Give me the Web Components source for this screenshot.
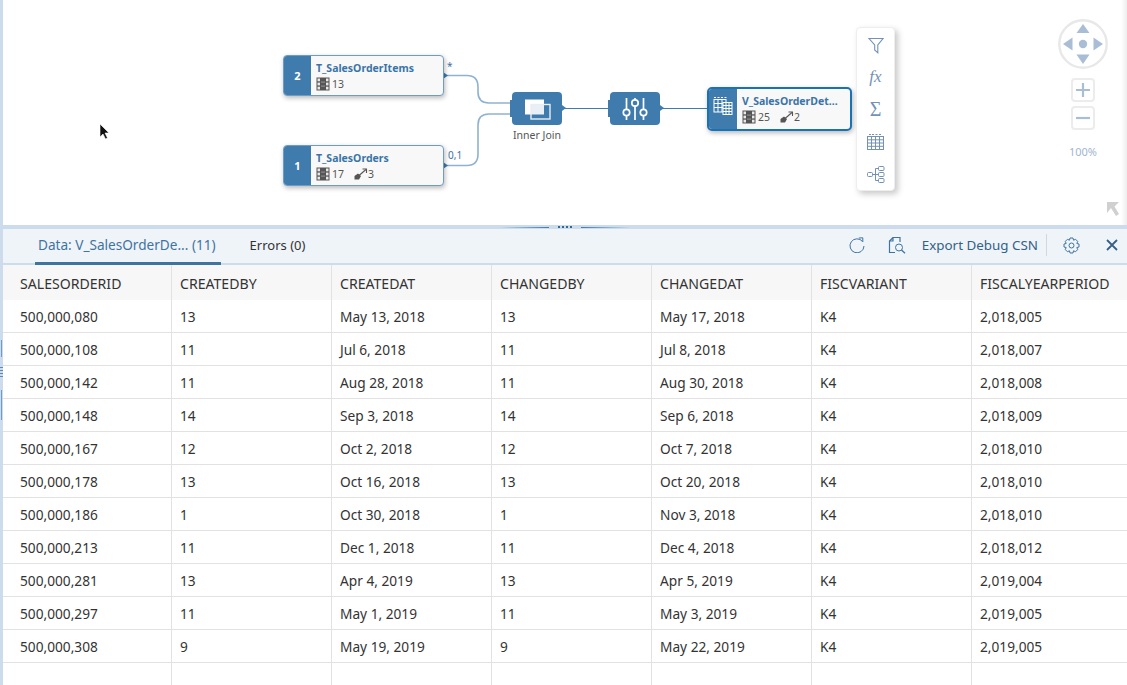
<!DOCTYPE html>
<html>
<head>
<meta charset="utf-8">
<title>Data preview</title>
<style>
  html, body { margin: 0; height: 100%; overflow: hidden; background: #fff; }
  body { font-family: "Noto Sans", "Liberation Sans", sans-serif; color: #333; }
</style>
</head>
<body>
<app-shell>
  <flow-canvas></flow-canvas>
  <split-bar></split-bar>
  <data-panel></data-panel>
</app-shell>

<script>
// small icons shared by the nodes
const ICON_COLUMNS = `<svg width="14" height="14" viewBox="0 0 14 14"><rect x="0.5" y="0.5" width="13" height="13" fill="#555"/><g fill="#e8e8e8"><rect x="1.5" y="1.5" width="2.5" height="2.8"/><rect x="1.5" y="5.6" width="2.5" height="2.8"/><rect x="1.5" y="9.7" width="2.5" height="2.8"/><rect x="10" y="1.5" width="2.5" height="2.8"/><rect x="10" y="5.6" width="2.5" height="2.8"/><rect x="10" y="9.7" width="2.5" height="2.8"/></g><rect x="5" y="4.6" width="4" height="1" fill="#999"/><rect x="5" y="8.6" width="4" height="1" fill="#999"/></svg>`;
const ICON_ASSOC = `<svg class="assoc" width="14" height="12" viewBox="0 0 14 12"><path d="M0.500 8 L4 5.500 L7 8 L5 11.500 H0.500 Z" fill="#555"/><path d="M5 7.500 L12 1.500" stroke="#555" stroke-width="1.100" fill="none"/><path d="M8.500 1 H12.500 V5" stroke="#555" stroke-width="1.100" fill="none"/></svg>`;
const ICON_TABLE_VIEW = `<svg width="20" height="20" viewBox="0 0 20 20" fill="none" stroke="#fff" stroke-width="1"><path d="M1 1.5h2M4.5 1.5h2M8 1.5h2M11.5 1.5h2" /><rect x="1" y="3.5" width="12" height="12.5"/><path d="M5 3.5v12.5M9 3.5v12.5M1 7.5h12M1 11.5h12"/><rect x="10" y="6.5" width="9" height="12" fill="#3f7cad"/><path d="M13 6.5v12M16 6.5v12M10 9.5h9M10 12.5h9M10 15.5h9"/></svg>`;

class AppShell extends HTMLElement {
  constructor() {
    super();
    this.attachShadow({ mode: 'open' });
    this.shadowRoot.innerHTML = `
      <style>
        :host { display: flex; width: 100%; height: 685px; overflow: hidden; }
        .edge { position: relative; flex: 0 0 3px; background: #cddcec; }
        .edge i { position: absolute; left: 1px; width: 1px; background: #6f9cc3; }
        .edge b { position: absolute; left: 0; width: 3px; height: 1px; background: #5b8bb6; }
        .main { flex: 1; min-width: 0; display: flex; flex-direction: column; }
      </style>
      <div class="edge">
        <i style="top:340px;height:17px"></i><i style="top:390px;height:30px"></i>
        <b style="top:367px"></b><b style="top:370px"></b><b style="top:373px"></b><b style="top:376px"></b>
      </div>
      <div class="main"><slot></slot></div>`;
  }
}

class FlowNode extends HTMLElement {
  constructor() {
    super();
    this.attachShadow({ mode: 'open' });
  }
  connectedCallback() {
    const assoc = this.getAttribute('assoc');
    const badge = this.getAttribute('badge');
    this.shadowRoot.innerHTML = `
      <style>
        :host { position: absolute; display: flex; box-sizing: border-box; border: 1px solid #6f9cc3; border-radius: 4px;
                background: #f8f8f8; box-shadow: 1px 2px 5px rgba(0,0,0,.28); overflow: hidden; }
        :host([selected]) { border: 2px solid #1a72b5; border-radius: 5px; }
        .side { flex: 0 0 27px; background: #3f7cad; color: #fff; font-size: 11px; font-weight: 700;
                display: flex; align-items: center; justify-content: center; }
        :host([selected]) .side { flex-basis: 28px; align-items: flex-start; padding-top: 7px; box-sizing: border-box; }
        .body { flex: 1; min-width: 0; padding: 5px 0 0 5px; }
        .name { font-size: 10.5px; font-weight: 700; color: #3a74a6; line-height: 14px; white-space: nowrap; }
        .meta { display: flex; align-items: center; font-size: 10.5px; color: #555; line-height: 14px; margin-top: 2px; }
        .meta svg { display: block; margin-right: 2px; }
        .meta svg.assoc { margin-right: 0; }
        .meta .n { margin-right: 10px; }
      </style>
      <div class="side">${badge || ICON_TABLE_VIEW}</div>
      <div class="body">
        <div class="name">${this.getAttribute('name')}</div>
        <div class="meta">${ICON_COLUMNS}<span class="n">${this.getAttribute('columns')}</span>${assoc ? ICON_ASSOC + '<span>' + assoc + '</span>' : ''}</div>
      </div>`;
  }
}

class OpNode extends HTMLElement {
  constructor() {
    super();
    this.attachShadow({ mode: 'open' });
    this.shadowRoot.innerHTML = `
      <style>
        :host { position: absolute; display: block; width: 50px; height: 33px; box-sizing: border-box;
                background: #3f7cad; border-radius: 4px; }
        .in { position: absolute; left: -2px; top: 8px; width: 2px; height: 17px; background: #3f7cad; }
        .out { position: absolute; right: -4px; top: 13px; border-left: 4px solid #3f7cad; border-top: 3.5px solid transparent; border-bottom: 3.5px solid transparent; }
        .icon { display: flex; height: 100%; align-items: center; justify-content: center; }
        .label { position: absolute; top: 36px; left: -20px; right: -20px; text-align: center; font-size: 10.5px; color: #555; line-height: 14px; }
      </style>
      <span class="in"></span><span class="out"></span>
      <div class="icon"><slot></slot></div>
      <div class="label"><slot name="label"></slot></div>`;
  }
}

class ToolPalette extends HTMLElement {
  constructor() {
    super();
    this.attachShadow({ mode: 'open' });
    this.shadowRoot.innerHTML = `
      <style>
        :host { position: absolute; left: 853px; top: 27px; width: 39px; height: 164px; box-sizing: border-box;
                display: flex; flex-direction: column; align-items: center; padding-top: 1px;
                background: #fff; border: 1px solid #eee; border-radius: 4px; box-shadow: 3px 3px 6px rgba(0,0,0,.22); }
        .t { flex: 0 0 32.3px; display: flex; align-items: center; justify-content: center; color: #7392b5; }
        .fx { font: italic 17px "Liberation Serif", serif; }
        .sum { font: 20px "Liberation Serif", serif; }
        svg { display: block; }
      </style>
      <div class="t"><svg width="16" height="17" viewBox="0 0 16 17" fill="none" stroke="#7392b5" stroke-width="1.1"><path d="M1 1.5 H15 L9.8 8 V15.8 L6.7 13 V8 Z"/></svg></div>
      <div class="t fx">fx</div>
      <div class="t sum">Σ</div>
      <div class="t"><svg width="17" height="16" viewBox="0 0 17 16" fill="none" stroke="#7392b5" stroke-width="1"><path d="M2 .5h2M5 .5h2M8.500 .5h2M12 .5h2"/><rect x=".5" y="2.500" width="16" height="13"/><path d="M4.500 2.500v13M8.500 2.500v13M12.500 2.500v13M.5 5.800h16M.5 9h16M.5 12.300h16"/></svg></div>
      <div class="t"><svg width="18" height="17" viewBox="0 0 18 17" fill="none" stroke="#7392b5" stroke-width="1"><rect x=".5" y="6.5" width="5" height="4" rx="1"/><rect x="11.500" y=".5" width="5.500" height="4" rx="1"/><rect x="11.500" y="6.5" width="5.500" height="4" rx="1"/><rect x="11.500" y="12.500" width="5.500" height="4" rx="1"/><path d="M5.500 8.500h6M8.500 2.500v12M8.500 2.500h3M8.500 14.500h3"/></svg></div>`;
  }
}

class NavControl extends HTMLElement {
  constructor() {
    super();
    this.attachShadow({ mode: 'open' });
    this.shadowRoot.innerHTML = `
      <style>
        :host { position: absolute; left: 1055px; top: 19px; width: 50px; display: flex; flex-direction: column; align-items: center; }
        svg { display: block; }
        .btn { width: 24px; height: 24px; box-sizing: border-box; border: 2px solid #ececec; border-radius: 4px; background: #fff; margin-top: 4px;
               display: flex; align-items: center; justify-content: center; }
        .pad { margin-bottom: 5px; }
        .zoom { font-size: 11px; color: #9fb6cf; line-height: 14px; margin-top: 15px; }
      </style>
      <svg class="pad" width="50" height="50" viewBox="0 0 50 50">
        <circle cx="25" cy="25" r="23.7" fill="#fff" stroke="#e8e8e8" stroke-width="2.4"/>
        <g fill="#a9bed5">
          <path d="M25 5 L31.5 14 H18.5 Z"/><path d="M25 45 L31.5 35.5 H18.5 Z"/>
          <path d="M5 25 L14.5 18.5 V31.5 Z"/><path d="M45 25 L35.5 18.5 V31.5 Z"/>
          <circle cx="25" cy="25" r="4.2"/>
        </g>
      </svg>
      <div class="btn"><svg width="16" height="16" viewBox="0 0 16 16"><path d="M8 1v14M1 8h14" stroke="#a9bed5" stroke-width="2.2"/></svg></div>
      <div class="btn"><svg width="16" height="16" viewBox="0 0 16 16"><path d="M1 8h14" stroke="#a9bed5" stroke-width="2.2"/></svg></div>
      <div class="zoom">100%</div>`;
  }
}

class FlowCanvas extends HTMLElement {
  constructor() {
    super();
    this.attachShadow({ mode: 'open' });
    this.shadowRoot.innerHTML = `
      <style>
        :host { position: relative; display: block; flex: 0 0 225px; background: #fff; overflow: hidden; }
        .edge-shade { position: absolute; right: 0; top: 0; bottom: 0; width: 6px; background: linear-gradient(to right, rgba(0,0,0,0), rgba(0,0,0,.07)); }
        svg.wires, svg.marks { position: absolute; left: 0; top: 0; }
        .card { position: absolute; font-size: 10px; color: #3a74a6; line-height: 12px; }
      </style>
      <svg class="wires" width="1124" height="225" viewBox="0 0 1124 225" fill="none">
        <path d="M440 75.5 H464 Q475 75.5 475 87 V92 Q475 103 486 103 H508" stroke="#8fb2d1" stroke-width="1.6"/>
        <path d="M440 165.5 H464 Q475 165.5 475 154 V125 Q475 114 486 114 H508" stroke="#8fb2d1" stroke-width="1.6"/>
        <path d="M558 108.5 H606 M657 108.5 H704" stroke="#3f7cad" stroke-width="1.2"/>
        <path d="M440 72 L445 75.5 L440 79 Z M440 162 L445 165.5 L440 169 Z" fill="#3f7cad"/>
      </svg>
      <span class="card" style="left:444px;top:60px">*</span>
      <span class="card" style="left:445px;top:149px">0,1</span>
      <flow-node name="T_SalesOrderItems" badge="2" columns="13" style="left:280px;top:55px;width:161px;height:41px"></flow-node>
      <flow-node name="T_SalesOrders" badge="1" columns="17" assoc="3" style="left:280px;top:145px;width:161px;height:41px"></flow-node>
      <op-node style="left:509px;top:92px">
        <svg width="30" height="22" viewBox="0 0 30 22"><rect x="3" y="1.500" width="19" height="15" fill="#fff"/><rect x="9" y="6.500" width="19" height="14.500" fill="#3f7cad" fill-opacity=".12" stroke="#e8eef4" stroke-width="1.400"/></svg>
        <span slot="label">Inner Join</span>
      </op-node>
      <op-node style="left:607px;top:92px">
        <svg width="26" height="24" viewBox="0 0 26 24" fill="none" stroke="#fff" stroke-width="1.7"><path d="M4.5 1v11M4.5 19v4M13 1v1.5M13 9.500v13.500M21.500 1v11M21.500 19v4"/><circle cx="4.500" cy="15.500" r="3.200"/><circle cx="13" cy="6" r="3.200"/><circle cx="21.500" cy="15.500" r="3.200"/></svg>
      </op-node>
      <flow-node selected name="V_SalesOrderDet..." columns="25" assoc="2" style="left:704px;top:87px;width:145px;height:44px"></flow-node>
      <tool-palette></tool-palette>
      <nav-control></nav-control>
      <svg class="marks" width="1124" height="225" viewBox="0 0 1124 225" style="pointer-events:none">
        <path d="M1104 202 H1116 L1111.500 206.500 L1116 214 L1113 216 L1108 208 L1104 213 Z" fill="#d0d0d0"/>
        <path d="M97 124 V137 L100 134 L102.500 139 L104.500 138 L102 133 H106 Z" fill="#111" stroke="#fff" stroke-width=".6"/>
      </svg>
      <div class="edge-shade"></div>`;
  }
}

class SplitBar extends HTMLElement {
  constructor() {
    super();
    this.attachShadow({ mode: 'open' });
    this.shadowRoot.innerHTML = `
      <style>
        :host { display: flex; flex: 0 0 4px; align-items: center; justify-content: center; background: #cddcec; }
        .line { width: 50px; height: 1px; }
        .l { background: linear-gradient(to right, transparent, #3f7cad); }
        .r { background: linear-gradient(to left, transparent, #3f7cad); }
        .grip { display: flex; gap: 2px; width: 32px; justify-content: center; }
        .grip i { width: 2px; height: 2px; background: #2f6a99; }
      </style>
      <div class="line l"></div>
      <div class="grip"><i></i><i></i><i></i><i></i></div>
      <div class="line r"></div>`;
  }
}

class DataPanel extends HTMLElement {
  constructor() {
    super();
    this.attachShadow({ mode: 'open' });
    this.shadowRoot.innerHTML = `
      <style>
        :host { display: flex; flex-direction: column; flex: 1; min-height: 0; }
      </style>
      <panel-toolbar></panel-toolbar>
      <data-table></data-table>`;
  }
}

class PanelToolbar extends HTMLElement {
  constructor() {
    super();
    this.attachShadow({ mode: 'open' });
    this.shadowRoot.innerHTML = `
      <style>
        :host { display: flex; flex: 0 0 36px; box-sizing: border-box; align-items: stretch; background: #eff4f9;
                border-bottom: 2px solid #cddcec; font-size: 13px; }
        .tab { display: flex; align-items: center; position: relative; white-space: nowrap; color: #333; padding-bottom: 3px; box-sizing: border-box; }
        .tab.on { color: #3f73a0; margin-left: 32px; padding: 0 5px 3px 3px; font-size: 13.6px; }
        .tab.on::after { content: ""; position: absolute; left: 0; right: 0; bottom: -2px; height: 3px; background: #3f73a0; }
        .tab + .tab { margin-left: 29px; }
        .tools { margin-left: auto; display: flex; align-items: center; color: #346187; font-size: 13.4px; padding-bottom: 2px; }
        .tools svg { display: block; }
        .sep { width: 1px; height: 22px; background: #cfd8e0; margin: 0 16px 0 8px; }
        .refresh { margin-right: 23px; }
        .find { margin-right: 16px; }
        .gear { margin-right: 26px; }
        .close { margin-right: 9px; }
      </style>
      <div class="tab on">Data: V_SalesOrderDe... (11)</div>
      <div class="tab">Errors (0)</div>
      <div class="tools">
        <svg class="refresh" width="16" height="16" viewBox="0 0 16 16" fill="none" stroke="#3f73a0" stroke-width="1"><path d="M13.500 4.500 A7 7 0 1 0 15 9"/><path d="M9.800 1 L13.800 .8 V5"/></svg>
        <svg class="find" width="18" height="17" viewBox="0 0 18 17" fill="none" stroke="#3f73a0" stroke-width="1"><path d="M5 .5 H12 V5 M7 15.500 H1.500 V4 L5 .5 V4 H1.500" stroke-width="1.200"/><circle cx="11" cy="10.500" r="3.500"/><path d="M13.500 13 L17 16.300" stroke-width="1.300"/></svg>
        <span>Export Debug CSN</span>
        <span class="sep"></span>
        <svg class="gear" width="17" height="17" viewBox="0 0 17 17" fill="none" stroke="#3f73a0" stroke-width="1"><path d="M7 1 H10 L10.500 3.200 L12.600 2.300 L14.700 4.400 L13.800 6.500 L16 7 V10 L13.800 10.500 L14.700 12.600 L12.600 14.700 L10.500 13.800 L10 16 H7 L6.500 13.800 L4.400 14.700 L2.300 12.600 L3.200 10.500 L1 10 V7 L3.200 6.500 L2.300 4.400 L4.400 2.300 L6.500 3.200 Z" stroke-linejoin="round"/><circle cx="8.500" cy="8.500" r="2.500"/></svg>
        <svg class="close" width="12" height="12" viewBox="0 0 12 12"><path d="M1 1 L11 11 M11 1 L1 11" stroke="#346187" stroke-width="1.800"/></svg>
      </div>`;
  }
}

const COLUMNS = ['SALESORDERID', 'CREATEDBY', 'CREATEDAT', 'CHANGEDBY', 'CHANGEDAT', 'FISCVARIANT', 'FISCALYEARPERIOD'];
const ROWS = [
  ['500,000,080', '13', 'May 13, 2018', '13', 'May 17, 2018', 'K4', '2,018,005'],
  ['500,000,108', '11', 'Jul 6, 2018', '11', 'Jul 8, 2018', 'K4', '2,018,007'],
  ['500,000,142', '11', 'Aug 28, 2018', '11', 'Aug 30, 2018', 'K4', '2,018,008'],
  ['500,000,148', '14', 'Sep 3, 2018', '14', 'Sep 6, 2018', 'K4', '2,018,009'],
  ['500,000,167', '12', 'Oct 2, 2018', '12', 'Oct 7, 2018', 'K4', '2,018,010'],
  ['500,000,178', '13', 'Oct 16, 2018', '13', 'Oct 20, 2018', 'K4', '2,018,010'],
  ['500,000,186', '1', 'Oct 30, 2018', '1', 'Nov 3, 2018', 'K4', '2,018,010'],
  ['500,000,213', '11', 'Dec 1, 2018', '11', 'Dec 4, 2018', 'K4', '2,018,012'],
  ['500,000,281', '13', 'Apr 4, 2019', '13', 'Apr 5, 2019', 'K4', '2,019,004'],
  ['500,000,297', '11', 'May 1, 2019', '11', 'May 3, 2019', 'K4', '2,019,005'],
  ['500,000,308', '9', 'May 19, 2019', '9', 'May 22, 2019', 'K4', '2,019,005'],
  ['', '', '', '', '', '', '']
];

class DataTable extends HTMLElement {
  constructor() {
    super();
    this.attachShadow({ mode: 'open' });
    const cell = (text, cls) => `<div class="${cls}">${text}</div>`;
    const head = COLUMNS.map(c => cell(c, 'h')).join('');
    const body = ROWS.map(r => r.map(v => cell(v, 'c')).join('')).join('');
    this.shadowRoot.innerHTML = `
      <style>
        :host { display: block; flex: 1; min-height: 0; overflow: hidden; background: #fff; font-size: 13.7px; color: #333; }
        .grid { display: grid; grid-template-columns: 169px repeat(5, 160px) 156px; grid-template-rows: 35px; grid-auto-rows: 33px; }
        .h, .c { box-sizing: border-box; padding: 1px 0 0 8px; border-right: 1px solid #e2e2e2; display: flex; align-items: center; white-space: nowrap; }
        .h { background: #f7f7f7; font-size: 14.1px; }
        .c { border-bottom: 1px solid #e2e2e2; }
        .h:nth-child(7n+1), .c:nth-child(7n+1) { padding-left: 17px; }
        .h:nth-child(7n), .c:nth-child(7n) { border-right: 0; }
      </style>
      <div class="grid">${head}${body}</div>`;
  }
}

customElements.define('app-shell', AppShell);
customElements.define('flow-node', FlowNode);
customElements.define('op-node', OpNode);
customElements.define('tool-palette', ToolPalette);
customElements.define('nav-control', NavControl);
customElements.define('flow-canvas', FlowCanvas);
customElements.define('split-bar', SplitBar);
customElements.define('data-panel', DataPanel);
customElements.define('panel-toolbar', PanelToolbar);
customElements.define('data-table', DataTable);
</script>
</body>
</html>
